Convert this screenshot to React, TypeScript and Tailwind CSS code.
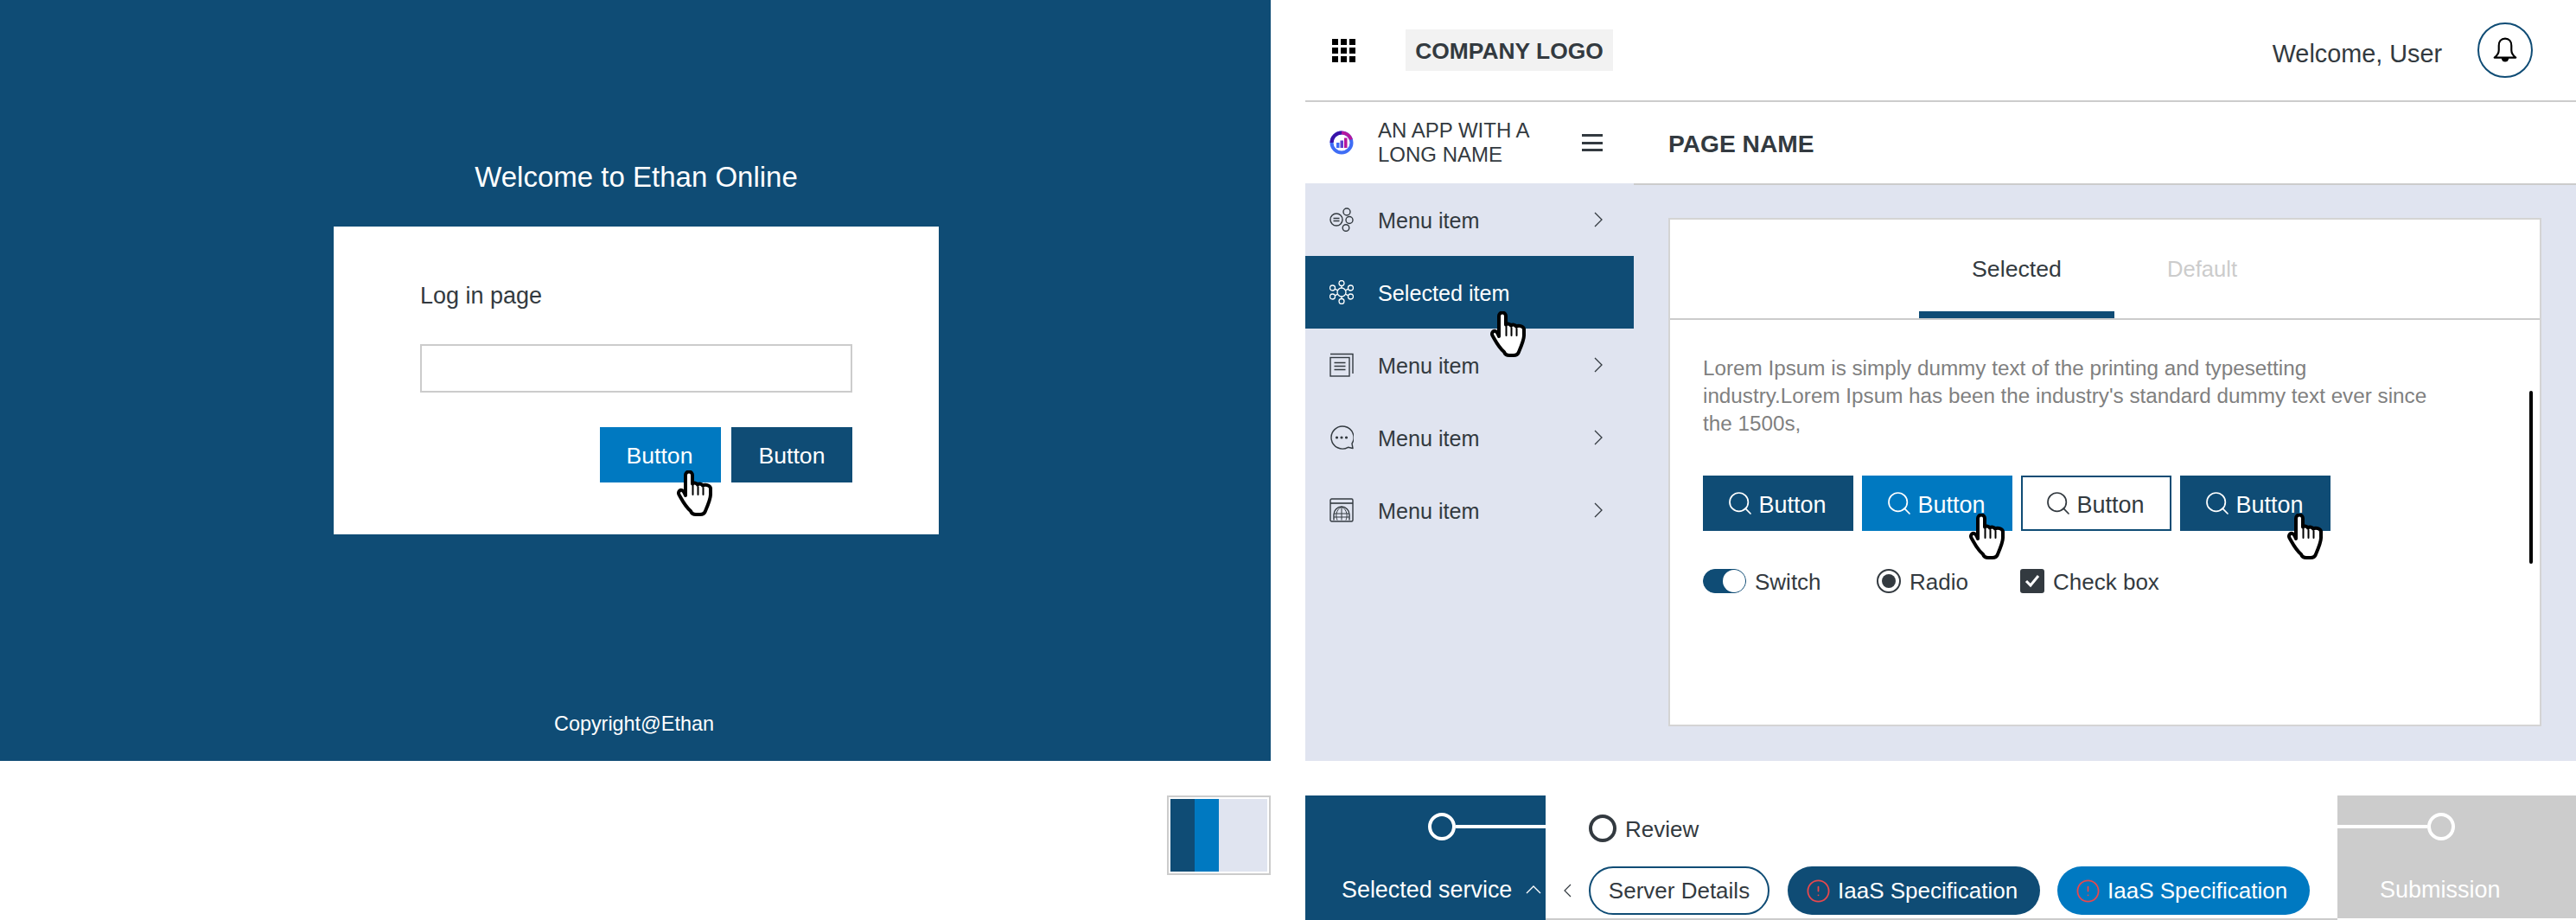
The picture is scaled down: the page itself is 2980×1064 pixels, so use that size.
import React from 'react';
import { Search, CircleAlert } from 'lucide-react';

const Hand: React.FC<{ className: string }> = ({ className }) => (
    <svg className={className} width="42" height="54" viewBox="0 0 42 54" fill="#fff" stroke="#000" strokeLinejoin="round" strokeLinecap="round">
        <path strokeWidth="4" d="M10 29V5.5a4 4 0 0 1 8 0V15.500c2-1.500 5-1 6 1c2-1.500 5-1 6 1c3-1.500 8-.5 9 3V28c0 5-3 12-6 19c-1 3-3 4-6 4h-5c-3 0-5-1-6-4C9 41 6 34 2.500 28c-1.500-3 1-6 3.500-5c2 1 3 3.500 4 6z" />
        <path strokeWidth="2" d="M18.500 17v11M24.500 19v9M30.500 20v8" fill="none" />
    </svg>
);

const GridIcon = () => (
    <svg width="27" height="27" viewBox="0 0 27 27" fill="#000">
        {[0, 10, 20].map(y => [0, 10, 20].map(x => <rect key={`${x}-${y}`} x={x} y={y} width="7" height="7" />))}
    </svg>
);

const AppLogo = () => (
    <svg width="28" height="28" viewBox="0 0 28 28" fill="none">
        <circle cx="14" cy="14" r="11.5" stroke="#3f6df5" strokeWidth="4" />
        <path d="M2.500 14A11.500 11.500 0 0 1 14 2.500" stroke="#3a12a8" strokeWidth="4" />
        <path d="M14 2.500A11.500 11.500 0 0 1 25 10.500" stroke="#b5179e" strokeWidth="4" />
        <rect x="8" y="14" width="3.500" height="6" fill="#3f6df5" />
        <rect x="12.500" y="11.500" width="3.500" height="8.500" fill="#5b3fd0" />
        <rect x="17" y="8.500" width="3.500" height="11.500" fill="#b5179e" />
    </svg>
);

const FlowerIcon = () => (
    <svg width="28" height="28" viewBox="0 0 28 28" fill="none" stroke="#333a40" strokeWidth="1.4">
        <circle cx="8" cy="14" r="7" />
        <path d="M4.500 12.500h7M4.500 15.500h7" />
        <circle cx="20" cy="5" r="4" />
        <circle cx="23" cy="14.500" r="4" />
        <circle cx="19" cy="23.500" r="3.800" />
    </svg>
);

const NodesIcon = () => (
    <svg width="28" height="28" viewBox="0 0 28 28" fill="none" stroke="#fff" strokeWidth="1.3">
        <circle cx="14" cy="14" r="5" />
        <circle cx="14" cy="3.500" r="3" />
        <circle cx="14" cy="24.500" r="3" />
        <circle cx="3.500" cy="9" r="3" />
        <circle cx="24.500" cy="9" r="3" />
        <circle cx="3.500" cy="19" r="3" />
        <circle cx="24.500" cy="19" r="3" />
        <path d="M14 6.500V9M14 19v2.500M6.300 10.200l3.300 1.600M21.700 10.200l-3.300 1.600M6.300 17.800l3.300-1.600M21.700 17.800l-3.300-1.600" />
    </svg>
);

const PagesIcon = () => (
    <svg width="28" height="28" viewBox="0 0 28 28" fill="none" stroke="#333a40" strokeWidth="1.4">
        <path d="M1 1.500h26V24" />
        <rect x="1" y="5.500" width="22" height="21.500" />
        <path d="M5.500 11.500h13M5.500 15.500h13M5.500 19.500h13" />
    </svg>
);

const ChatIcon = () => (
    <svg width="28" height="28" viewBox="0 0 28 28" fill="none" stroke="#333a40" strokeWidth="1.4">
        <path d="M27 26.500l-5.500-1.200A13 13 0 1 1 26 21z" strokeLinejoin="round" />
        <circle cx="8.500" cy="14" r=".9" fill="#333a40" />
        <circle cx="14" cy="14" r=".9" fill="#333a40" />
        <circle cx="19.500" cy="14" r=".9" fill="#333a40" />
    </svg>
);

const BrowserIcon = () => (
    <svg width="28" height="28" viewBox="0 0 28 28" fill="none" stroke="#333a40" strokeWidth="1.4">
        <rect x="1" y="1" width="26" height="26" rx="1.500" />
        <path d="M1 6h26" strokeWidth="1.600" />
        <path d="M5 25.500V19a9 9 0 0 1 18 0v6.500" />
        <path d="M14 10v15.500M5 18h18M5 22h18M14 10c-7 4-7 11-5 15.500M14 10c7 4 7 11 5 15.500" strokeWidth="1" />
    </svg>
);

const BellIcon = () => (
    <svg width="28" height="30" viewBox="0 0 26 28" fill="none" stroke="#000" strokeWidth="2">
        <path d="M13 1.500c-4.500 0-6.800 3.200-6.800 7.500v5c0 3.500-2 6-4.700 8h23c-2.700-2-4.700-4.500-4.700-8V9c0-4.300-2.300-7.500-6.800-7.500z" strokeLinejoin="round" />
        <path d="M9 22.500a4 4 0 0 0 8 0z" fill="#000" stroke="none" />
    </svg>
);

const ChevronRight = () => (
    <svg width="10" height="18" viewBox="0 0 10 18" fill="none" stroke="#333a40" strokeWidth="1.3">
        <path d="M1 1l8 8-8 8" />
    </svg>
);

const MenuRow: React.FC<{ icon: React.ReactNode; label: string }> = ({ icon, label }) => (
    <div className="h-[84px] flex items-center pl-[28px] text-[#333a40]">
        <div className="w-[28px] h-[28px]">{icon}</div>
        <span className="ml-[28px] pt-[4px] text-[25.2px] w-[250px]">{label}</span>
        <ChevronRight />
    </div>
);

const IconButton: React.FC<{ className: string; children?: React.ReactNode }> = ({ className, children }) => (
    <div className={`relative w-[174px] h-[64px] pr-[4px] flex items-center justify-center gap-[5px] text-[27px] ${className}`}>
        <Search size={32} strokeWidth={1.3} />
        <span className="pt-[4px]">Button</span>
        {children}
    </div>
);

const Chip: React.FC<{ className: string }> = ({ className }) => (
    <div className={`w-[292px] h-[56px] rounded-full flex items-center pl-[21px] text-white text-[26px] ${className}`}>
        <CircleAlert size={29} strokeWidth={1.5} className="text-[#e8484d]" />
        <span className="ml-[8px]">IaaS Specification</span>
    </div>
);

const App: React.FC = () => {
    return (
        <div className="w-[2980px] h-[1064px] overflow-hidden bg-white flex flex-col font-['Liberation_Sans',Arial,sans-serif] text-[#333a40]">
            <div className="h-[880px] flex gap-[40px]">
                {/* Login */}
                <div className="w-[1470px] bg-[#0f4c75] flex flex-col items-center pl-[2px] pt-[185px]">
                    <h1 className="text-[33px] leading-[40px] text-white mb-[37px]">Welcome to Ethan Online</h1>
                    <div className="w-[700px] h-[356px] bg-white px-[100px] pt-[64px]">
                        <p className="text-[27px] leading-[32px]">Log in page</p>
                        <div className="h-[56px] mt-[40px] border-2 border-[#cccccc]" />
                        <div className="flex justify-end gap-[12px] mt-[40px] text-white text-[26.6px]">
                            <div className="relative w-[140px] h-[64px] pt-[4px] pr-[2px] bg-[#0079c1] flex items-center justify-center">
                                Button
                                <Hand className="absolute left-[89px] top-[50px]" />
                            </div>
                            <div className="w-[140px] h-[64px] pt-[4px] bg-[#0f4c75] flex items-center justify-center">Button</div>
                        </div>
                    </div>
                    <p className="mt-auto pb-[27px] text-[23.4px] leading-[32px] text-white pr-[5px]">Copyright@Ethan</p>
                </div>

                {/* App shell */}
                <div className="w-[1470px] flex flex-col">
                    <header className="h-[118px] shrink-0 border-b-2 border-[#cccccc] flex items-center pl-[31px] pr-[50px]">
                        <GridIcon />
                        <div className="ml-[58px] w-[240px] h-[48px] pt-[4px] bg-[#f2f2f2] flex items-center justify-center text-[26.4px] font-bold">COMPANY LOGO</div>
                        <span className="ml-auto pt-[10px] text-[28.8px]">Welcome, User</span>
                        <div className="ml-[41px] w-[64px] h-[64px] rounded-full border-2 border-[#0f4c75] flex items-center justify-center">
                            <BellIcon />
                        </div>
                    </header>
                    <div className="flex-1 flex">
                        <aside className="w-[380px] bg-[#e0e4f0] flex flex-col">
                            <div className="h-[94px] bg-white flex items-center pl-[28px]">
                                <AppLogo />
                                <div className="ml-[28px] w-[236px] text-[24px] leading-[28px]">AN APP WITH A<br />LONG NAME</div>
                                <div className="flex flex-col gap-[5.5px]">
                                    <div className="w-[24px] h-[3px] bg-[#333a40]" />
                                    <div className="w-[24px] h-[3px] bg-[#333a40]" />
                                    <div className="w-[24px] h-[3px] bg-[#333a40]" />
                                </div>
                            </div>
                            <MenuRow icon={<FlowerIcon />} label="Menu item" />
                            <div className="relative h-[84px] bg-[#0f4c75] flex items-center pl-[28px] text-white">
                                <div className="w-[28px] h-[28px]"><NodesIcon /></div>
                                <span className="ml-[28px] pt-[4px] text-[25.2px]">Selected item</span>
                                <Hand className="absolute left-[214px] top-[64px]" />
                            </div>
                            <MenuRow icon={<PagesIcon />} label="Menu item" />
                            <MenuRow icon={<ChatIcon />} label="Menu item" />
                            <MenuRow icon={<BrowserIcon />} label="Menu item" />
                        </aside>
                        <main className="flex-1 flex flex-col">
                            <div className="h-[96px] shrink-0 pt-[2px] bg-white border-b-2 border-[#cccccc] flex items-center pl-[40px] text-[28.2px] font-bold">PAGE NAME</div>
                            <div className="flex-1 bg-[#e0e4f0] pl-[40px] pr-[40px] pt-[38px] pb-[40px]">
                                <div className="relative h-full bg-white border-2 border-[#d4d4d4]">
                                    <div className="h-[116px] border-b-2 border-[#cccccc] flex pl-[288px]">
                                        <div className="w-[226px] h-[114px] pt-[8px] border-b-8 border-[#0f4c75] flex items-center justify-center text-[26.7px]">Selected</div>
                                        <div className="ml-[61px] h-[114px] flex items-center text-[25.6px] text-[#cccccc]">Default</div>
                                    </div>
                                    <div className="pl-[38px] pt-[40px]">
                                        <p className="w-[850px] text-[24.25px] leading-[32px] text-[#808080]">Lorem Ipsum is simply dummy text of the printing and typesetting industry.Lorem Ipsum has been the industry's standard dummy text ever since the 1500s,</p>
                                        <div className="flex gap-[10px] mt-[44px]">
                                            <IconButton className="bg-[#0f4c75] text-white" />
                                            <IconButton className="bg-[#0079c1] text-white">
                                                <Hand className="absolute left-[124px] top-[44px]" />
                                            </IconButton>
                                            <IconButton className="bg-white border-2 border-[#0f4c75] text-[#333a40]" />
                                            <IconButton className="bg-[#0f4c75] text-white">
                                                <Hand className="absolute left-[124px] top-[44px]" />
                                            </IconButton>
                                        </div>
                                        <div className="flex items-center mt-[44px] h-[28px] text-[26px]">
                                            <div className="w-[50px] h-[28px] rounded-full bg-[#0f4c75] flex justify-end border border-[#0f4c75]">
                                                <div className="w-[26px] h-[26px] rounded-full bg-white" />
                                            </div>
                                            <span className="ml-[10px] pt-[3px] w-[141px]">Switch</span>
                                            <div className="w-[28px] h-[28px] rounded-full border-2 border-[#333a40] flex items-center justify-center">
                                                <div className="w-[16px] h-[16px] rounded-full bg-[#333a40]" />
                                            </div>
                                            <span className="ml-[10px] pt-[3px] w-[128px]">Radio</span>
                                            <div className="w-[28px] h-[28px] rounded-[3px] bg-[#333a40] flex items-center justify-center">
                                                <svg width="18" height="16" viewBox="0 0 18 16" fill="none" stroke="#fff" strokeWidth="3"><path d="M2 8l5 5 9-11" /></svg>
                                            </div>
                                            <span className="ml-[10px] pt-[3px]">Check box</span>
                                        </div>
                                    </div>
                                    <div className="absolute right-[8px] top-[198px] w-[4px] h-[200px] rounded-full bg-black" />
                                </div>
                            </div>
                        </main>
                    </div>
                </div>
            </div>

            <div className="flex-1 flex gap-[40px] pt-[40px]">
                {/* Colour swatch */}
                <div className="w-[1470px] flex justify-end items-start">
                    <div className="border-2 border-[#cccccc] p-[2px] flex h-[92px]">
                        <div className="w-[28px] bg-[#0f4c75]" />
                        <div className="w-[28px] bg-[#0079c1]" />
                        <div className="w-[56px] bg-[#e0e4f0]" />
                    </div>
                </div>

                {/* Stepper */}
                <div className="w-[1470px] flex items-start">
                    <div className="w-[278px] h-[144px] bg-[#0f4c75] text-white">
                        <div className="flex justify-end items-center pt-[20px]">
                            <div className="w-[32px] h-[32px] rounded-full border-4 border-white" />
                            <div className="w-[104px] h-[4px] bg-white" />
                        </div>
                        <div className="flex items-center mt-[41px] pl-[42px] h-[32px] text-[26.9px]">
                            <span>Selected service</span>
                            <svg className="ml-[16px]" width="18" height="10" viewBox="0 0 18 10" fill="none" stroke="#fff" strokeWidth="1.3"><path d="M1 9l8-8 8 8" /></svg>
                        </div>
                    </div>
                    <div className="w-[916px] h-[144px] border-b-2 border-[#cccccc] pl-[21px] pt-[22px]">
                        <div className="flex items-center pl-[29px] h-[32px]">
                            <div className="w-[32px] h-[32px] rounded-full border-[4px] border-[#333a40]" />
                            <span className="ml-[10px] pt-[3px] text-[26px]">Review</span>
                        </div>
                        <div className="flex items-center mt-[28px]">
                            <svg width="9" height="16" viewBox="0 0 9 16" fill="none" stroke="#333a40" strokeWidth="1.2"><path d="M8 1L1 8l7 7" /></svg>
                            <div className="ml-[20px] w-[209px] h-[56px] rounded-full border-2 border-[#0f4c75] flex items-center justify-center text-[26px]">Server Details</div>
                            <Chip className="ml-[21px] bg-[#0f4c75]" />
                            <Chip className="ml-[20px] bg-[#0079c1]" />
                        </div>
                    </div>
                    <div className="w-[276px] h-[142px] bg-[#cccccc] text-white">
                        <div className="flex items-center pt-[20px]">
                            <div className="w-[104px] h-[4px] bg-white" />
                            <div className="w-[32px] h-[32px] rounded-full border-4 border-white" />
                        </div>
                        <div className="mt-[41px] pl-[49px] h-[32px] flex items-center text-[27px]">Submission</div>
                    </div>
                </div>
            </div>
        </div>
    );
};

export default App;
